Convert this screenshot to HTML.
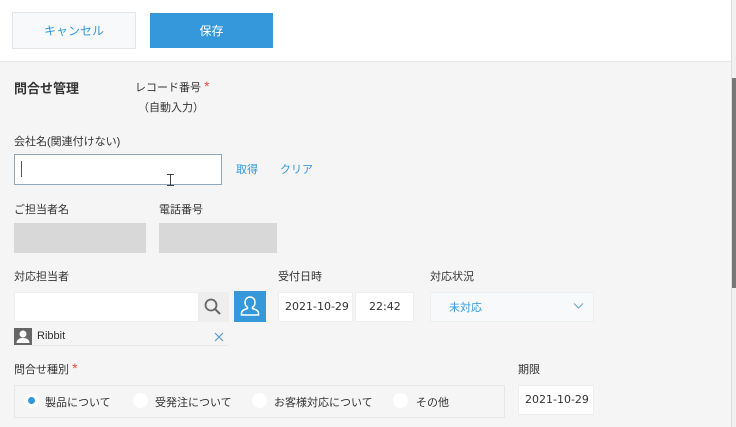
<!DOCTYPE html>
<html><head><meta charset="utf-8"><style>
*{box-sizing:border-box;margin:0;padding:0}
body{width:736px;height:427px;overflow:hidden;background:#f5f5f5;font-family:"Liberation Sans","Noto Sans CJK JP",sans-serif;font-size:11px;color:#333;position:relative}
.a{position:absolute}
.hdr{left:0;top:0;width:731px;height:62px;background:#fff;border-bottom:1px solid #e6e6e6}
.btn{display:flex;align-items:center;justify-content:center;font-size:12px}
.lbl{font-size:11px;color:#333;white-space:nowrap}
.red{color:#e74c3c;font-size:14px;line-height:11px}
.box{background:#fff;border:1px solid #e3e3e3}
.g{background:#d8d8d8}
.blue{color:#3498db}
.rad{width:15px;height:15px;border-radius:50%;background:#fff}
</style></head><body>
<div class="a hdr"></div>
<div class="a btn" style="left:12px;top:12px;width:124px;height:37px;background:#f7f9fa;border:1px solid #e3e7e8;color:#3498db">キャンセル</div>
<div class="a btn" style="left:150px;top:13px;width:123px;height:35px;background:#3498db;color:#fff">保存</div>
<div class="a" style="left:731px;top:0;width:5px;height:427px;background:#f0f0f0;border-left:1px solid #ddd"></div>
<div class="a" style="left:732px;top:78px;width:4px;height:210px;background:#777"></div>

<div class="a" style="left:14px;top:78px;font-size:13px;font-weight:bold">問合せ管理</div>
<div class="a lbl" style="left:135px;top:79px">レコード番号 <span class="red">*</span></div>
<div class="a lbl" style="left:138px;top:99px">（自動入力）</div>

<div class="a lbl" style="left:14px;top:133px">会社名(関連付けない)</div>
<div class="a" style="left:14px;top:154px;width:208px;height:31px;background:#fff;border:1px solid #8fa7b8"></div>
<div class="a" style="left:21px;top:161px;width:1px;height:16px;background:#555"></div>
<div class="a" style="left:170px;top:174px;width:1px;height:12px;background:#444"></div>
<div class="a" style="left:167px;top:174px;width:7px;height:1px;background:#444"></div>
<div class="a" style="left:167px;top:185px;width:7px;height:1px;background:#444"></div>
<div class="a lbl blue" style="left:236px;top:161px">取得</div>
<div class="a lbl blue" style="left:280px;top:161px">クリア</div>

<div class="a lbl" style="left:14px;top:201px">ご担当者名</div>
<div class="a lbl" style="left:159px;top:201px">電話番号</div>
<div class="a g" style="left:14px;top:223px;width:132px;height:30px"></div>
<div class="a g" style="left:159px;top:223px;width:118px;height:30px"></div>

<div class="a lbl" style="left:14px;top:268px">対応担当者</div>
<div class="a box" style="left:14px;top:292px;width:185px;height:30px;border-color:#eee"></div>
<div class="a" style="left:198px;top:292px;width:31px;height:30px;background:#eeeeee"></div>
<svg class="a" style="left:203px;top:297px" width="20" height="20" viewBox="0 0 20 20"><circle cx="8" cy="8" r="5.5" fill="none" stroke="#666" stroke-width="1.8"/><line x1="12" y1="12" x2="17" y2="17" stroke="#666" stroke-width="2"/></svg>
<div class="a" style="left:234px;top:291px;width:32px;height:31px;background:#3498db"></div>
<svg class="a" style="left:238px;top:294px" width="24" height="25" viewBox="0 0 24 25"><path d="M12 3c-3.3 0-5 2.5-5 5.5 0 2.2 1 3.8 2.5 4.8v1.2c-3.5 1-6 2.5-6 4.5v2h17v-2c0-2-2.5-3.5-6-4.5v-1.2c1.5-1 2.5-2.6 2.5-4.8 0-3-1.700-5.5-5-5.5z" fill="none" stroke="#fff" stroke-width="1.5"/></svg>
<div class="a lbl" style="left:278px;top:268px">受付日時</div>
<div class="a box" style="left:278px;top:292px;width:75px;height:30px;border-color:#eee;font-family:'DejaVu Sans',sans-serif;font-size:11px;padding:7px 0 0 6px;color:#333">2021-10-29</div>
<div class="a box" style="left:355px;top:292px;width:59px;height:30px;border-color:#eee;font-family:'DejaVu Sans',sans-serif;font-size:11px;padding:7px 0 0 13px">22:42</div>
<div class="a lbl" style="left:430px;top:268px">対応状況</div>
<div class="a" style="left:430px;top:292px;width:164px;height:30px;background:#f7f9fa;border:1px solid #eceff0"></div>
<div class="a lbl blue" style="left:449px;top:299px">未対応</div>
<svg class="a" style="left:573px;top:302px" width="11" height="8" viewBox="0 0 11 8"><path d="M1 1.5l4.5 4.5 4.5-4.5" fill="none" stroke="#7aa9c9" stroke-width="1.2"/></svg>

<div class="a" style="left:14px;top:328px;width:18px;height:17px;background:#666"></div>
<svg class="a" style="left:14px;top:328px" width="18" height="17" viewBox="0 0 18 17"><circle cx="9" cy="6" r="3.5" fill="#fff"/><path d="M2.5 15c0-3.5 3-5 6.5-5s6.5 1.5 6.5 5z" fill="#fff"/></svg>
<div class="a" style="left:32px;top:345px;width:196px;height:1px;background:#e8e8e8"></div>
<div class="a lbl" style="left:37px;top:330px;font-size:11px">Ribbit</div>
<svg class="a" style="left:214px;top:332px" width="10" height="10" viewBox="0 0 10 10"><path d="M1 1l8 8M9 1l-8 8" stroke="#5b9bc8" stroke-width="1.2"/></svg>

<div class="a lbl" style="left:14px;top:361px">問合せ種別 <span class="red">*</span></div>
<div class="a" style="left:14px;top:385px;width:491px;height:33px;background:#f5f5f5;border:1px solid #e6e6e6"></div>
<div class="a rad" style="left:24px;top:393px;border:4px solid #fff;background:#3498db"></div>
<div class="a lbl" style="left:45px;top:394px">製品について</div>
<div class="a rad" style="left:133px;top:393px"></div>
<div class="a lbl" style="left:155px;top:394px">受発注について</div>
<div class="a rad" style="left:252px;top:393px"></div>
<div class="a lbl" style="left:274px;top:394px">お客様対応について</div>
<div class="a rad" style="left:393px;top:393px"></div>
<div class="a lbl" style="left:416px;top:394px">その他</div>
<div class="a lbl" style="left:518px;top:361px">期限</div>
<div class="a box" style="left:518px;top:385px;width:76px;height:30px;border-color:#eee;font-family:'DejaVu Sans',sans-serif;font-size:11px;padding:7px 0 0 6px">2021-10-29</div>
</body></html>
